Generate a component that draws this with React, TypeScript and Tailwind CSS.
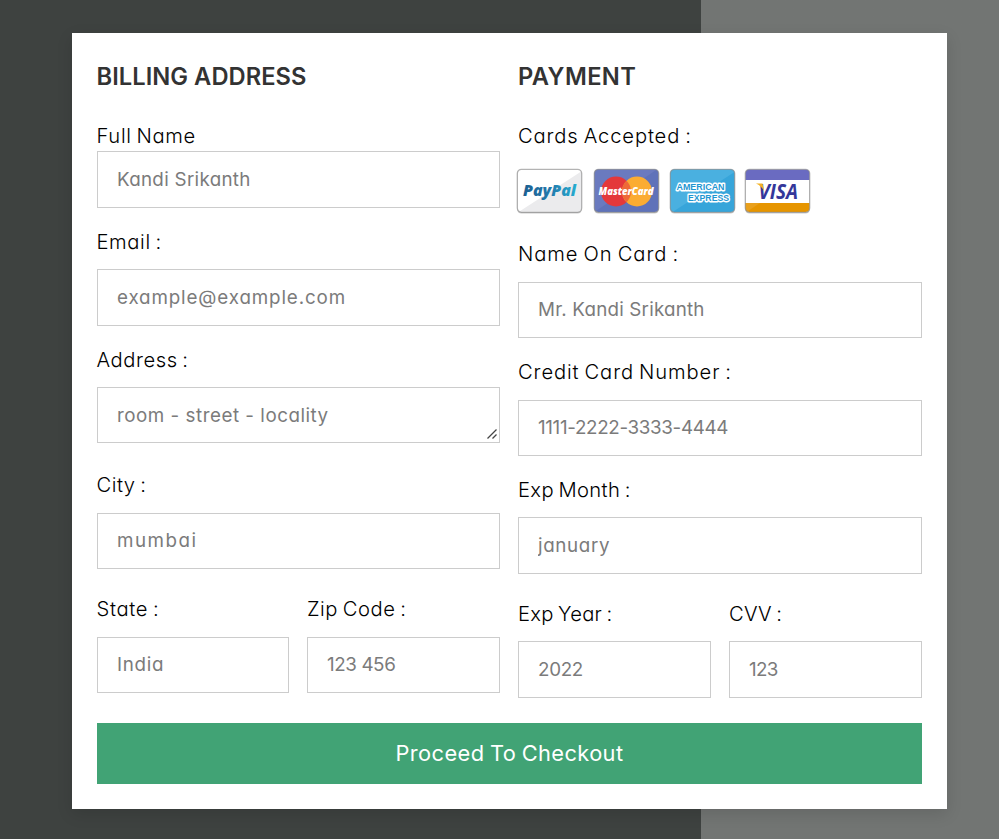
import type { ReactNode } from "react";

type FieldProps = {
  label: string;
  placeholder: string;
  className?: string;
  labelClass?: string;
  inputClass?: string;
  multiline?: boolean;
};

function Field({ label, placeholder, className = "", labelClass = "mb-3", inputClass = "h-14", multiline }: FieldProps) {
  const box =
    "block w-full resize-none overflow-hidden border border-[#ccc] bg-white px-[19px] text-[18.8px] leading-7 font-normal text-black placeholder:text-[#7b7b7b] outline-none";
  return (
    <div className={`min-w-0 flex-1 ${className}`}>
      <label className={`block h-[30px] text-[20.2px] leading-[30px] font-light [word-spacing:-1.5px] whitespace-nowrap text-black ${labelClass}`}>
        {label}
      </label>
      {multiline ? (
        <div className="relative">
          <textarea placeholder={placeholder} className={`${box} pt-[14px] pb-[12px] ${inputClass}`} />
          <svg className="absolute right-[2px] bottom-[4px] h-[11px] w-[11px]" viewBox="0 0 11 11" stroke="#444" strokeWidth="1.3">
            <path d="M0.5 10.5 L9.5 1.5 M5.5 10.5 L9.5 6.5" />
          </svg>
        </div>
      ) : (
        <input placeholder={placeholder} className={`${box} pb-px ${inputClass}`} />
      )}
    </div>
  );
}

function CardBadge({ id, base, children }: { id: string; base: string; children: ReactNode }) {
  return (
    <svg className="h-[46px] w-[67px] shrink-0" viewBox="0 0 67 46">
      <defs>
        <clipPath id={id}>
          <rect x="1.5" y="1.5" width="64" height="42.5" rx="4" />
        </clipPath>
      </defs>
      <rect x="1" y="1.5" width="65" height="44" rx="4.5" fill="#777" opacity="0.4" />
      <g clipPath={`url(#${id})`}>
        <rect width="67" height="46" fill={base} />
        {children}
      </g>
      <rect x="1.3" y="1.3" width="64.4" height="43" rx="4.2" fill="none" stroke="#888" strokeOpacity="0.6" strokeWidth="1.3" />
    </svg>
  );
}

function Cards() {
  const bold = "'Open Sans', 'Noto Sans', sans-serif";
  return (
    <div className="mt-[17px] -ml-[2px] flex h-[46px]">
      <CardBadge id="paypal" base="#fff">
        <path d="M1 45 L66 3 V45 Z" fill="#ebebed" />
        <defs>
          <linearGradient id="pp" x1="0" x2="1">
            <stop offset="0" stopColor="#1d5f91" />
            <stop offset="0.5" stopColor="#2379ac" />
            <stop offset="1" stopColor="#25acd0" />
          </linearGradient>
        </defs>
        <text x="7" y="27.5" fontFamily={bold} fontStyle="italic" fontWeight="800" fontSize="16.5" textLength="53" lengthAdjust="spacingAndGlyphs" fill="url(#pp)">
          PayPal
        </text>
      </CardBadge>
      <div className="w-[10px]" />
      <CardBadge id="mastercard" base="#5f72b9">
        <path d="M0 0 H66 L0 45 Z" fill="#6a7abf" />
        <circle cx="23" cy="23.5" r="15" fill="#e4383b" />
        <circle cx="44" cy="23.5" r="15" fill="#fbac32" />
        <path d="M33.5 12.8 A15 15 0 0 1 33.5 34.2 A15 15 0 0 1 33.5 12.8" fill="#ee6938" />
        <text x="5.5" y="27" fontFamily={bold} fontStyle="italic" fontWeight="800" fontSize="10.5" textLength="55" lengthAdjust="spacingAndGlyphs" fill="#fff">
          MasterCard
        </text>
      </CardBadge>
      <div className="w-[9px]" />
      <CardBadge id="amex" base="#37a5da">
        <path d="M0 0 H67 V3 L2 45 H0 Z" fill="#4ab0e0" />
        <g fontFamily="'Liberation Sans', sans-serif" fontWeight="700" fontSize="9.4" fill="#1e96d2" stroke="#fff" strokeWidth="2.8" strokeLinejoin="round" paintOrder="stroke">
          <text x="7.5" y="21.7" textLength="48" lengthAdjust="spacingAndGlyphs">AMERICAN</text>
          <text x="19" y="32.7" textLength="41" lengthAdjust="spacingAndGlyphs">EXPRESS</text>
        </g>
      </CardBadge>
      <div className="w-[8px]" />
      <CardBadge id="visa" base="#fff">
        <rect width="67" height="12" fill="#6a6bc1" />
        <path d="M0 35 H67 V46 H0 Z" fill="#e69500" />
        <path d="M1 45 L16 35 H0 V45 Z" fill="#e9a01c" />
        <text x="14.5" y="30.8" fontFamily={bold} fontStyle="italic" fontWeight="700" fontSize="21" textLength="39.5" lengthAdjust="spacingAndGlyphs" fill="#34379a">
          VISA
        </text>
        <path d="M12 15.5 H18.5 L20.3 23.5 Q17.5 18 12 15.5 Z" fill="#f4b223" />
      </CardBadge>
    </div>
  );
}

const heading = "h-9 pt-px text-[23.7px] leading-9 font-semibold whitespace-nowrap text-[#333]";

export default function App() {
  return (
    <main className="h-[839px] w-[999px] overflow-hidden bg-linear-to-r from-[#3e4240] from-[701px] to-[#727573] to-[701px] px-[72px] pt-[33px] font-['Inter',sans-serif] [font-feature-settings:'cv11']">
      <form className="h-[776px] w-[875px] bg-white p-[25px] shadow-[0_5px_15px_rgba(0,0,0,0.12)]">
        <div className="flex h-[665px] gap-[18px]">
          <section className="w-[403px]">
            <h3 className={`${heading} -ml-[0.5px] tracking-[0.05px]`}>BILLING ADDRESS</h3>
            <Field className="mt-[27px]" label="Full Name" placeholder="Kandi Srikanth" labelClass="-ml-[0.5px] tracking-[0.65px]" inputClass="h-[57px] tracking-[0.3px]" />
            <Field className="mt-[19px]" label="Email :" placeholder="example@example.com" labelClass="-ml-[0.5px] mb-3 tracking-[0.6px]" inputClass="h-[57px] tracking-[0.86px]" />
            <Field className="mt-[19px]" label="Address :" placeholder="room - street - locality" labelClass="-ml-[0.5px] mb-3 tracking-[0.55px]" inputClass="h-14 tracking-[0.52px]" multiline />
            <Field className="mt-[27px]" label="City :" placeholder="mumbai" labelClass="-ml-[0.5px] mb-[13px] tracking-[0.5px]" inputClass="h-14 tracking-[1.5px]" />
            <div className="mt-[25px] grid grid-cols-[192px_193px] gap-[18px]">
              <Field label="State :" placeholder="India" labelClass="-ml-[0.5px] mb-[13px] tracking-[0.65px]" inputClass="h-14 tracking-[0.7px]" />
              <Field label="Zip Code :" placeholder="123 456" labelClass="mb-[13px] tracking-[0.55px]" inputClass="h-14 tracking-[-0.4px]" />
            </div>
          </section>
          <section className="w-[404px]">
            <h3 className={`${heading} tracking-[0.4px]`}>PAYMENT</h3>
            <p className="mt-[27px] h-[30px] text-[20.2px] leading-[30px] font-light tracking-[0.86px] [word-spacing:-1.5px]">Cards Accepted :</p>
            <Cards />
            <Field className="mt-[25px]" label="Name On Card :" placeholder="Mr. Kandi Srikanth" labelClass="mb-[13px] tracking-[0.92px]" inputClass="h-14 tracking-[0.2px]" />
            <Field className="mt-[19px]" label="Credit Card Number :" placeholder="1111-2222-3333-4444" labelClass="mb-[13px] tracking-[0.88px]" inputClass="h-14 tracking-[-0.33px]" />
            <Field className="mt-[19px]" label="Exp Month :" placeholder="january" labelClass="mb-3 tracking-[0.35px]" inputClass="h-[57px] tracking-[0.65px]" />
            <div className="mt-[25px] flex gap-[18px]">
              <Field label="Exp Year :" placeholder="2022" labelClass="mb-3 tracking-[0.25px]" inputClass="h-[57px] tracking-[-0.3px]" />
              <Field label="CVV :" placeholder="123" labelClass="mb-3 tracking-[0.2px]" inputClass="h-[57px] tracking-[-0.7px]" />
            </div>
          </section>
        </div>
        <button type="button" className="block h-[61px] w-full bg-[#41a375] text-[21.8px] font-normal tracking-[0.4px] [word-spacing:-1px] text-white">
          Proceed To Checkout
        </button>
      </form>
    </main>
  );
}
